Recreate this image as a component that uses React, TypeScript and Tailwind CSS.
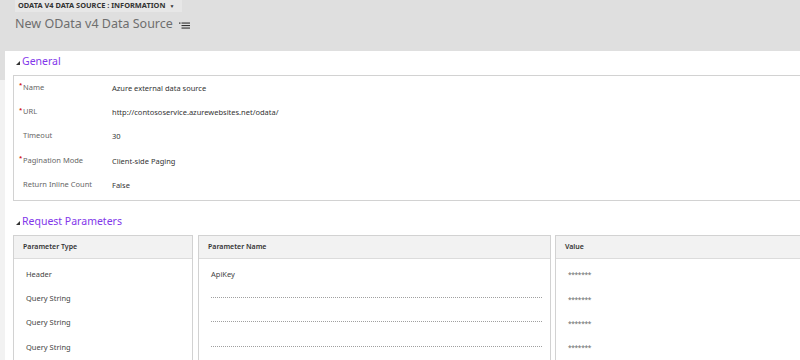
import React from "react";

function Triangle() {
  return (
    <svg width="4" height="4" viewBox="0 0 4 4" className="shrink-0">
      <polygon points="4,0 4,4 0,4" fill="#333" />
    </svg>
  );
}

function SectionHeading({ title, pt }: { title: string; pt: string }) {
  return (
    <div className={`flex items-center gap-[2px] pl-[3px] ${pt}`}>
      <div className="pt-[3px]">
        <Triangle />
      </div>
      <span className="text-[10.5px] leading-[14px] text-[#8237ea]">{title}</span>
    </div>
  );
}

const fields: { label: string; value: string; req: boolean }[] = [
  { label: "Name", value: "Azure external data source", req: true },
  { label: "URL", value: "http://contososervice.azurewebsites.net/odata/", req: true },
  { label: "Timeout", value: "30", req: false },
  { label: "Pagination Mode", value: "Client-side Paging", req: true },
  { label: "Return Inline Count", value: "False", req: false },
];

const types = ["Header", "Query String", "Query String", "Query String"];

export default function App() {
  return (
    <div className="w-[800px] h-[360px] overflow-hidden bg-[#dfdfdf] flex flex-col font-['Noto_Sans','Open_Sans',sans-serif]">
      {/* Header */}
      <div className="h-[51px] shrink-0 pl-[15px] flex flex-col items-start">
        <div className="h-[12px] pl-[3px] pr-[8px] bg-[#e7e7e7] flex items-center gap-[4px] text-[7.4px] font-bold text-[#333] leading-none">
          <span>ODATA V4 DATA SOURCE : INFORMATION</span>
          <span className="text-[5px]">▼</span>
        </div>
        <div className="mt-[4px] flex items-center gap-[6px]">
          <span className="text-[12.5px] leading-[16px] text-[#6e6e6e]">New OData v4 Data Source</span>
          <svg width="11" height="7" viewBox="0 0 11 7" className="mt-[2px]">
            <rect x="0" y="0.5" width="1.5" height="1.2" fill="#333" />
            <rect x="2.5" y="0.5" width="8.5" height="1.1" fill="#333" />
            <rect x="2.5" y="3" width="8.5" height="1.1" fill="#333" />
            <rect x="2.5" y="5.5" width="8.5" height="1.1" fill="#333" />
          </svg>
        </div>
      </div>

      <div className="flex flex-1 min-h-0">
        <div className="w-[5px] shrink-0 flex flex-col">
          <div className="h-[29px] bg-[#dfdfdf]" />
          <div className="flex-1 bg-[#f2f2f2]" />
        </div>
        <div className="flex-1 min-w-0 bg-white pl-[8px] flex flex-col">
          <div className="h-[24px] shrink-0">
            <SectionHeading title="General" pt="pt-[3px]" />
          </div>
          <div className="h-[126px] shrink-0 border border-r-0 border-[#d2d2d2] flex flex-col">
            {fields.map((f) => (
              <div key={f.label} className="h-[24.4px] flex items-center pl-[5px] text-[7.5px]">
                <span className="w-[4px] text-[#d01010] -translate-y-[3px] text-[6px] font-bold leading-none">
                  {f.req ? "*" : ""}
                </span>
                <span className="w-[89px] text-[#666] -translate-y-[1px]">{f.label}</span>
                <span className="text-[#333]">{f.value}</span>
              </div>
            ))}
          </div>
          <div className="h-[34px] shrink-0">
            <SectionHeading title="Request Parameters" pt="pt-[13px]" />
          </div>
          <div className="flex flex-1 min-h-0 text-[7.5px]">
            {/* Column 1 */}
            <div className="w-[180px] shrink-0 border border-b-0 border-[#d2d2d2] flex flex-col">
              <div className="h-[23px] bg-[#f2f2f2] border-b border-[#dcdcdc] flex items-center pl-[9px] font-semibold text-[7px] text-[#333]">
                Parameter Type
              </div>
              <div className="pt-[3px]">
                {types.map((t, i) => (
                  <div key={i} className="h-[24.4px] flex items-center pl-[12px] text-[#444]">
                    {t}
                  </div>
                ))}
              </div>
            </div>
            {/* Column 2 */}
            <div className="w-[353px] ml-[5px] shrink-0 border border-b-0 border-[#d2d2d2] flex flex-col">
              <div className="h-[23px] bg-[#f2f2f2] border-b border-[#dcdcdc] flex items-center pl-[9px] font-semibold text-[7px] text-[#333]">
                Parameter Name
              </div>
              <div className="pt-[3px]">
                <div className="h-[24.4px] flex items-center pl-[12px] text-[#444]">ApiKey</div>
                {[0, 1, 2].map((i) => (
                  <div key={i} className="h-[24.4px] flex items-center pl-[12px] pr-[8px]">
                    <div className="flex-1 border-t border-dotted border-[#a0a0a0] -translate-y-[1px]" />
                  </div>
                ))}
              </div>
            </div>
            {/* Column 3 */}
            <div className="flex-1 ml-[4px] border border-r-0 border-b-0 border-[#d2d2d2] flex flex-col">
              <div className="h-[23px] bg-[#f2f2f2] border-b border-[#dcdcdc] flex items-center pl-[9px] font-semibold text-[7px] text-[#333]">
                Value
              </div>
              <div className="pt-[3px]">
                {[0, 1, 2, 3].map((i) => (
                  <div key={i} className="h-[24.4px] flex items-center pl-[12px] text-[#666] text-[6.5px] tracking-[-0.3px]">
                    <span className="translate-y-[1px]">*******</span>
                  </div>
                ))}
              </div>
            </div>
          </div>
        </div>
      </div>
    </div>
  );
}
